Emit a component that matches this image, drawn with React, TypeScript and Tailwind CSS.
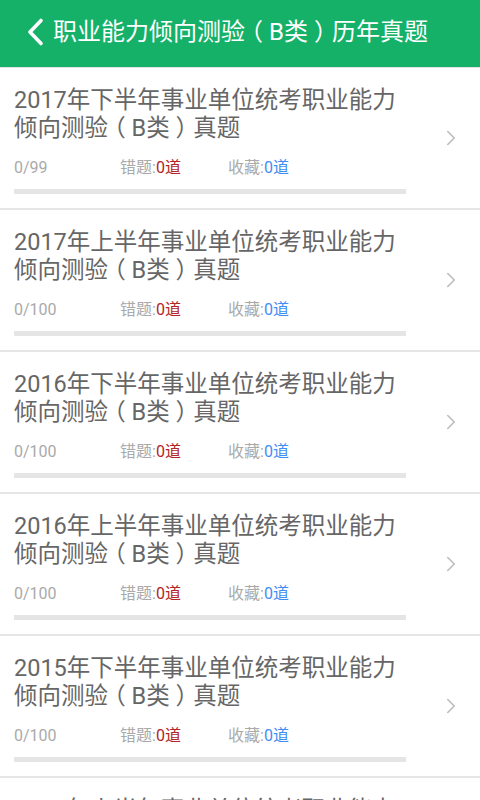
import { ChevronRight } from "lucide-react"

const papers = [
  { year: "2017年下半年", done: 0, total: 99 },
  { year: "2017年上半年", done: 0, total: 100 },
  { year: "2016年下半年", done: 0, total: 100 },
  { year: "2016年上半年", done: 0, total: 100 },
  { year: "2015年下半年", done: 0, total: 100 },
  { year: "2015年上半年", done: 0, total: 100 },
]

// full-width parens, centred in their box like the Android fallback font
const Paren = ({ ch }: { ch: string }) => (
  <span className="inline-block w-[1em] text-center [font-feature-settings:'halt']">{ch}</span>
)

const PaperItem = ({ year, done, total }: { year: string; done: number; total: number }) => (
  <div className="flex items-center border-b-2 border-[#e6e6e6] bg-white">
    <div className="flex-1 pl-[14px] pt-[18px] pb-[14px]">
      {/* Title */}
      <div className="text-[23.5px] leading-[28px] text-[#666666]">
        <div>{year}事业单位统考职业能力</div>
        <div>
          倾向测验<Paren ch="（" />B类<Paren ch="）" />真题
        </div>
      </div>

      {/* Stats */}
      <div className="mt-[16px] flex items-center text-[16px] leading-[20px] text-[#aaaaaa]">
        <span className="w-[106px]">
          {done}/{total}
        </span>
        <span className="w-[108px]">
          错题:<span className="text-[#b32525]">0道</span>
        </span>
        <span>
          收藏:<span className="text-[#3f8ef3]">0道</span>
        </span>
      </div>

      {/* Progress */}
      <div className="mt-[11px] h-[5px] w-[392px] bg-[#e5e5e5]" />
    </div>

    <ChevronRight className="mr-[16px] h-[26px] w-[26px] text-[#bdbdbd]" strokeWidth={1.5} />
  </div>
)

export default function App() {
  return (
    <div
      className="min-h-[800px] bg-white"
      style={{ fontFamily: 'Roboto, "Noto Sans CJK SC", sans-serif' }}
    >
      {/* Header */}
      <header className="flex h-[68px] items-center border-b border-[#e3e3e3] bg-[#15b169] pb-[4px] pl-[26px]">
        <svg width="20" height="30" viewBox="0 0 20 30" fill="none" className="shrink-0">
          <polyline
            points="15,3.5 4,15 15,26.5"
            stroke="white"
            strokeWidth="3.6"
            strokeLinecap="round"
            strokeLinejoin="round"
          />
        </svg>
        <h1 className="ml-[7px] text-[24px] font-normal text-white">
          职业能力倾向测验<Paren ch="（" />B类<Paren ch="）" />历年真题
        </h1>
      </header>

      {papers.map((p) => (
        <PaperItem key={p.year} {...p} />
      ))}
    </div>
  )
}
